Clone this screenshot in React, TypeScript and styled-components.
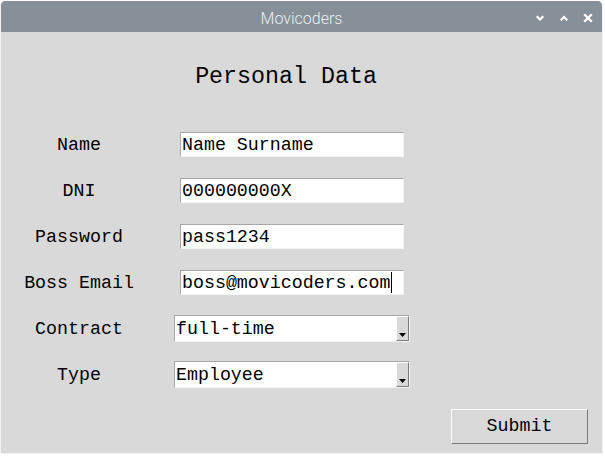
import React from "react";
import styled, { createGlobalStyle } from "styled-components";

const Global = createGlobalStyle`
  html, body { margin: 0; padding: 0; background: #ffffff; }
  body { width: 605px; height: 456px; overflow: hidden; }
`;

const Window = styled.div`
  width: 603px;
  height: 453px;
  margin-top: 1px;
  display: flex;
  flex-direction: column;
  background: #d9d9d9;
  border-left: 1px solid #f2f2f2;
  border-right: 1px solid #f2f2f2;
  border-bottom: 1px solid #f2f2f2;
  border-radius: 5px 5px 0 0;
  overflow: hidden;
  box-sizing: border-box;
`;

const TitleBar = styled.div`
  height: 31px;
  flex: none;
  background: #878f99;
  display: flex;
  align-items: center;
  justify-content: center;
  position: relative;
  padding-top: 3px;
  box-sizing: border-box;
  font-family: Roboto, "Liberation Sans", sans-serif;
  font-weight: 300;
  font-size: 16px;
  color: #eceef0;
`;

const Controls = styled.div`
  position: absolute;
  right: 8px;
  top: 1px;
  height: 100%;
  display: flex;
  align-items: center;
  gap: 12px;
`;

const Body = styled.div`
  flex: 1;
  display: flex;
  flex-direction: column;
  padding-top: 31px;
  font-family: "Liberation Mono", "DejaVu Sans Mono", monospace;
  color: #000;
`;

const Heading = styled.h1`
  margin: 0;
  font-weight: normal;
  font-size: 23.3px;
  line-height: 28px;
  height: 28px;
  width: 570px;
  text-align: center;
`;

const Form = styled.div`
  margin-top: 30px;
  display: grid;
  grid-template-columns: 156px 1fr;
  grid-auto-rows: 46px;
  align-items: center;
  font-size: 18.3px;
`;

const Label = styled.div`
  text-align: center;
  line-height: 22px;
  padding-top: 2px;
`;

const Entry = styled.div`
  margin-left: 23px;
  width: 224px;
  height: 25px;
  box-sizing: border-box;
  background: #ffffff;
  border-top: 1px solid #a8a8a8;
  border-left: 1px solid #a8a8a8;
  border-right: 1px solid #f4f4f4;
  border-bottom: 1px solid #f4f4f4;
  padding-left: 1px;
  padding-top: 2px;
  line-height: 22px;
  white-space: nowrap;
  display: flex;
  align-items: center;
`;

const Caret = styled.span`
  display: inline-block;
  width: 1px;
  height: 21px;
  margin-top: -2px;
  background: #000;
  margin-left: 1px;
`;

const Combo = styled.div`
  margin-left: 17px;
  width: 236px;
  height: 27px;
  box-sizing: border-box;
  background: #ffffff;
  border-top: 1px solid #a8a8a8;
  border-left: 1px solid #a8a8a8;
  border-right: 1px solid #f4f4f4;
  border-bottom: 1px solid #f4f4f4;
  display: flex;
  align-items: stretch;
`;

const ComboText = styled.div`
  flex: 1;
  padding-left: 1px;
  padding-top: 1px;
  line-height: 24px;
`;

const ArrowButton = styled.div`
  width: 13px;
  box-sizing: border-box;
  background: #d9d9d9;
  border-top: 1px solid #ffffff;
  border-left: 1px solid #ffffff;
  border-right: 1px solid #7a7a7a;
  border-bottom: 1px solid #7a7a7a;
  display: flex;
  align-items: flex-end;
  justify-content: center;
  padding-bottom: 3px;
`;

const Footer = styled.div`
  display: flex;
  justify-content: flex-end;
  padding-right: 14px;
  margin-top: 12px;
`;

const Button = styled.button`
  width: 137px;
  height: 35px;
  box-sizing: border-box;
  background: #d9d9d9;
  border-top: 1px solid #ffffff;
  border-left: 1px solid #ffffff;
  border-right: 1px solid #7a7a7a;
  border-bottom: 1px solid #7a7a7a;
  font-family: "Liberation Mono", "DejaVu Sans Mono", monospace;
  font-size: 18.3px;
  color: #000;
  padding: 0 0 2px 0;
`;

const Icon = ({ d }: { d: string }) => (
  <svg width="12" height="12" viewBox="0 0 12 12">
    <path d={d} stroke="#ffffff" strokeWidth={2.2} fill="none" strokeLinecap="square" />
  </svg>
);

const Triangle = () => (
  <svg width="7" height="4" viewBox="0 0 7 4">
    <path d="M0 0 H7 L3.5 4 Z" fill="#000" />
  </svg>
);

const fields = [
  { label: "Name", value: "Name Surname" },
  { label: "DNI", value: "000000000X" },
  { label: "Password", value: "pass1234" },
  { label: "Boss Email", value: "boss@movicoders.com", caret: true },
];

const choices = [
  { label: "Contract", value: "full-time" },
  { label: "Type", value: "Employee" },
];

export default function App() {
  return (
    <>
      <Global />
      <Window>
        <TitleBar>
          Movicoders
          <Controls>
            <Icon d="M3.5 5 L6 7.5 L8.5 5" />
            <Icon d="M3.5 7.5 L6 5 L8.5 7.5" />
            <Icon d="M3 3 L9 9 M9 3 L3 9" />
          </Controls>
        </TitleBar>
        <Body>
          <Heading>Personal Data</Heading>
          <Form>
            {fields.map((f) => (
              <React.Fragment key={f.label}>
                <Label>{f.label}</Label>
                <Entry>
                  {f.value}
                  {f.caret && <Caret />}
                </Entry>
              </React.Fragment>
            ))}
            {choices.map((c) => (
              <React.Fragment key={c.label}>
                <Label>{c.label}</Label>
                <Combo>
                  <ComboText>{c.value}</ComboText>
                  <ArrowButton>
                    <Triangle />
                  </ArrowButton>
                </Combo>
              </React.Fragment>
            ))}
          </Form>
          <Footer>
            <Button>Submit</Button>
          </Footer>
        </Body>
      </Window>
    </>
  );
}
